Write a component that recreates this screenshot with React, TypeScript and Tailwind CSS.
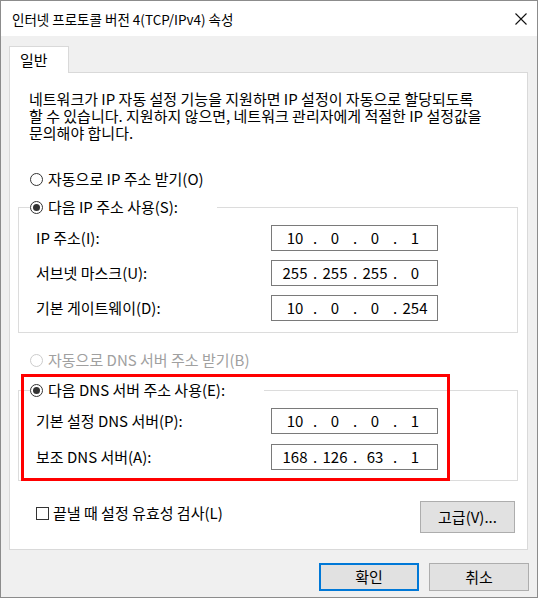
import { Fragment } from 'react';

const font = "font-['Noto_Sans_CJK_KR','Noto_Sans',sans-serif]";

function Radio({ checked, disabled, label }: { checked?: boolean; disabled?: boolean; label: string }) {
  return (
    <div className={`flex h-[20px] items-center gap-[5px] whitespace-nowrap ${disabled ? 'text-[#a0a0a0]' : 'text-black'}`}>
      <span
        className={`flex h-[13px] w-[13px] shrink-0 items-center justify-center rounded-full border bg-white ${
          disabled ? 'border-[#cccccc]' : 'border-[#333333]'
        }`}
      >
        {checked && <span className="h-[7px] w-[7px] rounded-full bg-[#333333]" />}
      </span>
      <span>{label}</span>
    </div>
  );
}

function IpBox({ parts }: { parts: string[] }) {
  return (
    <div className="flex h-[26px] w-[167px] items-center border border-[#7a7a7a] bg-white pl-[7px]">
      {parts.map((p, i) => (
        <Fragment key={i}>
          {i > 0 && <span className="w-[8px] text-center">.</span>}
          <span className="w-[32px] text-center">{p}</span>
        </Fragment>
      ))}
    </div>
  );
}

function FieldRow({ label, parts }: { label: string; parts: string[] }) {
  return (
    <div className="flex items-center">
      <span className="w-[235px] whitespace-nowrap">{label}</span>
      <IpBox parts={parts} />
    </div>
  );
}

export default function App() {
  return (
    <div className={`h-[600px] w-[538px] bg-white text-[15px] leading-[20px] text-black ${font}`}>
      <div className="flex h-[598px] w-[538px] flex-col border border-[#8c8c8c] bg-[#f0f0f0]">
        {/* title bar */}
        <div className="flex h-[35px] shrink-0 items-center justify-between bg-white pl-[11px] pr-[10px]">
          <span className="whitespace-nowrap text-[13.5px]">인터넷 프로토콜 버전 4(TCP/IPv4) 속성</span>
          <svg width="12" height="12" viewBox="0 0 12 12" className="mt-[1px]">
            <path d="M0.5 0.5 L11.5 11.5 M11.5 0.5 L0.5 11.5" stroke="#111" strokeWidth="1.1" fill="none" />
          </svg>
        </div>

        <div className="flex flex-1 flex-col px-[8px] pt-[10px]">
          {/* tab */}
          <div className="flex">
            <div className="relative z-10 -mb-px flex h-[27px] w-[60px] items-center border border-b-0 border-[#d9d9d9] bg-white pl-[10px]">
              일반
            </div>
          </div>

          {/* panel */}
          <div className="relative w-[519px] border border-[#d9d9d9] bg-white pb-[16px]">
            <div className="whitespace-nowrap pl-[19px] pt-[17px] leading-[17px]">
              <div>네트워크가 IP 자동 설정 기능을 지원하면 IP 설정이 자동으로 할당되도록</div>
              <div>할 수 있습니다. 지원하지 않으면, 네트워크 관리자에게 적절한 IP 설정값을</div>
              <div>문의해야 합니다.</div>
            </div>

            <div className="mt-[28px] pl-[20px]">
              <Radio label="자동으로 IP 주소 받기(O)" />
            </div>

            <fieldset className="ml-[8px] mr-[9px] mt-[8px] border border-[#dcdcdc] pb-[11px]">
              <legend className="ml-[11px] w-[187px]">
                <Radio checked label="다음 IP 주소 사용(S):" />
              </legend>
              <div className="mt-[8px] flex flex-col gap-[9px] pl-[17px]">
                <FieldRow label="IP 주소(I):" parts={['10', '0', '0', '1']} />
                <FieldRow label="서브넷 마스크(U):" parts={['255', '255', '255', '0']} />
                <FieldRow label="기본 게이트웨이(D):" parts={['10', '0', '0', '254']} />
              </div>
            </fieldset>

            <div className="mt-[17px] pl-[20px]">
              <Radio disabled label="자동으로 DNS 서버 주소 받기(B)" />
            </div>

            <fieldset className="ml-[8px] mr-[9px] mt-[10px] border border-[#dcdcdc] pb-[10px]">
              <legend className="ml-[11px] w-[234px]">
                <Radio checked label="다음 DNS 서버 주소 사용(E):" />
              </legend>
              <div className="mt-[8px] flex flex-col gap-[10px] pl-[17px]">
                <FieldRow label="기본 설정 DNS 서버(P):" parts={['10', '0', '0', '1']} />
                <FieldRow label="보조 DNS 서버(A):" parts={['168', '126', '63', '1']} />
              </div>
            </fieldset>

            <div className="mt-[20px] flex items-start justify-between pl-[26px] pr-[12px]">
              <div className="mt-[2px] flex h-[20px] items-center gap-[4px] whitespace-nowrap">
                <span className="h-[13px] w-[13px] border border-[#333333] bg-white" />
                <span>끝낼 때 설정 유효성 검사(L)</span>
              </div>
              <button className="h-[32px] w-[95px] border border-[#adadad] bg-[#e1e1e1]">고급(V)...</button>
            </div>

            {/* highlight annotation */}
            <div className="pointer-events-none absolute left-[11px] top-[301px] h-[107px] w-[429px] border-[3px] border-[#ff0000]" />
          </div>

          {/* dialog buttons */}
          <div className="mt-[13px] flex justify-end gap-[10px]">
            <button className="h-[28px] w-[100px] border-2 border-[#0078d7] bg-[#e1e1e1]">확인</button>
            <button className="h-[28px] w-[100px] border border-[#adadad] bg-[#e1e1e1]">취소</button>
          </div>
        </div>
      </div>
    </div>
  );
}
